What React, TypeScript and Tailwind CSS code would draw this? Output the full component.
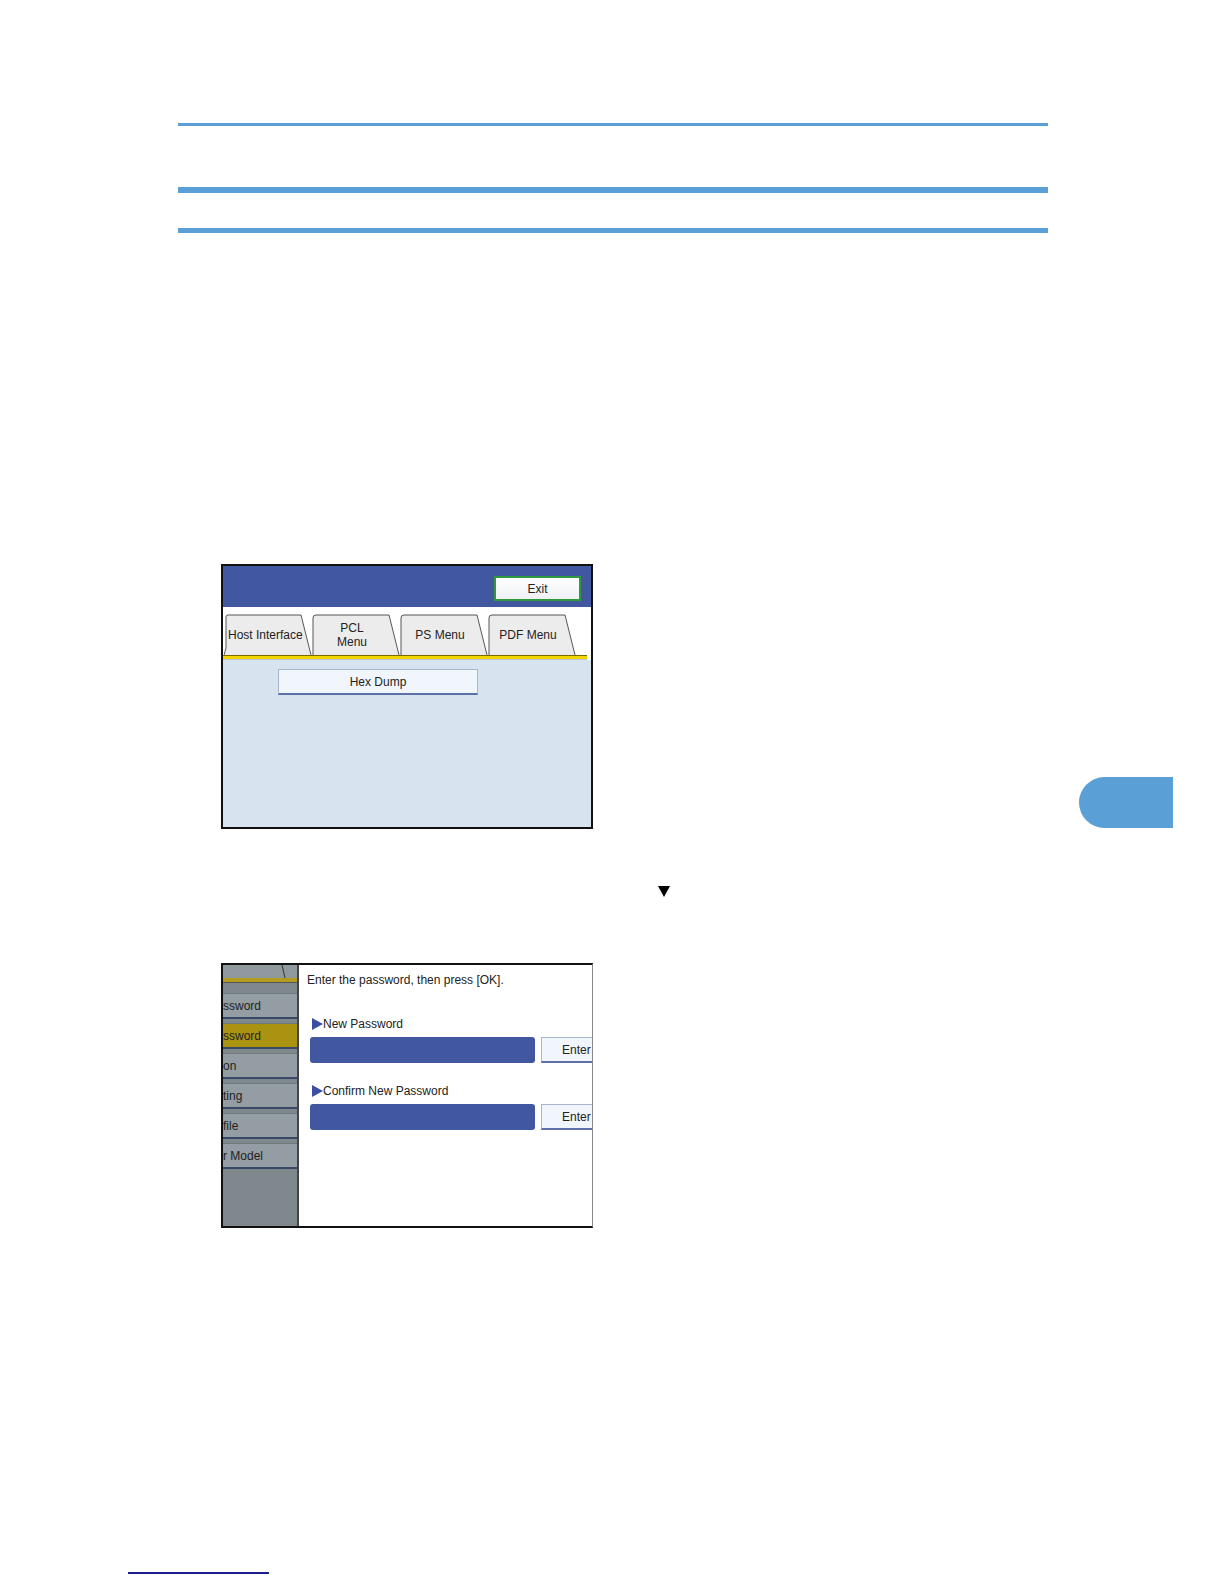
import React from 'react';

const screenFont = { fontFamily: '"Liberation Sans", Arial, sans-serif' };

function Tab({ label, first }: { label: React.ReactNode; first?: boolean }) {
  return (
    <div className="relative w-[88px] h-[41px] shrink-0">
      <svg className="absolute inset-0" width="88" height="41" viewBox="0 0 88 41">
        <path
          d={first ? 'M0 41 L2 34 L2 3 Q2 1 4 1 L77 1 L87 41' : 'M1 41 L1 4 Q1 1 4 1 L77 1 L87 41'}
          fill="#ececec"
          stroke="#555"
          strokeWidth="1"
        />
      </svg>
      <div
        className={`relative h-full flex items-center whitespace-nowrap text-[12px] leading-[14px] text-[#222] text-center ${
          first ? 'justify-start pl-[4px]' : 'justify-center pr-[8px]'
        }`}
      >
        {label}
      </div>
    </div>
  );
}

function PrinterMenuShot() {
  return (
    <div className="w-[372px] h-[265px] border-2 border-[#111] flex flex-col overflow-hidden" style={screenFont}>
      {/* header */}
      <div className="h-[41px] bg-[#4158a0] flex items-start justify-end pr-[10px] pt-[10px]">
        <div className="w-[87px] h-[25px] border-2 border-[#2f9a3c] bg-gradient-to-b from-white to-[#eef1f4] flex items-center justify-center text-[12px] text-[#222]">
          Exit
        </div>
      </div>
      {/* tabs */}
      <div className="h-[48px] bg-white flex items-end pl-[1px]">
        <Tab first label="Host Interface" />
        <Tab label={<span>PCL<br />Menu</span>} />
        <Tab label="PS Menu" />
        <Tab label="PDF Menu" />
      </div>
      <div className="h-[5px] bg-[#f2d400] border-t border-[#7a6a00] border-b border-b-[#b8c4d0] mr-[4px]"></div>
      {/* body */}
      <div className="flex-1 bg-[#d7e3ef] pt-[9px] pl-[55px]">
        <div className="w-[200px] h-[26px] bg-[#f1f5fc] border border-[#a7b6cc] border-b-2 border-b-[#5b6fa8] flex items-center justify-center text-[12px] text-[#222]">
          Hex Dump
        </div>
      </div>
    </div>
  );
}

function SideItem({ label, active }: { label: string; active?: boolean }) {
  return (
    <div
      className={`h-[26px] mt-[4px] flex items-center text-[12px] text-[#222] border-b-2 border-b-[#3a4868] border-t border-t-[#6f7a80] ${
        active ? 'bg-[#a99310]' : 'bg-[#939da3]'
      }`}
    >
      {label}
    </div>
  );
}

function EnterRow() {
  return (
    <div className="flex items-center mt-[5px]">
      <div className="w-[225px] h-[26px] rounded-[3px] bg-[#4158a0] shrink-0"></div>
      <div className="ml-[6px] w-[60px] h-[26px] bg-[#f1f5fc] border border-[#a7b6cc] border-b-2 border-b-[#5b6fa8] flex items-center justify-start pl-[20px] text-[12px] text-[#222] shrink-0">
        Enter
      </div>
    </div>
  );
}

function PasswordShot() {
  return (
    <div className="w-[372px] h-[265px] border-2 border-[#111] border-r-[#888] border-r flex overflow-hidden" style={screenFont}>
      {/* left menu */}
      <div className="w-[76px] shrink-0 bg-[#7e888d] border-r-2 border-r-[#444] flex flex-col">
        <div className="relative h-[13px] bg-[#8f999e]">
          <svg className="absolute left-[58px] top-0" width="8" height="13" viewBox="0 0 8 13">
            <path d="M1 0 L4 13" stroke="#333" strokeWidth="1" fill="none" />
          </svg>
        </div>
        <div className="h-[5px] bg-[#b39a20] border-b border-[#555]"></div>
        <div className="mt-[6px]">
          <SideItem label="ssword" />
          <SideItem label="ssword" active />
          <SideItem label="on" />
          <SideItem label="ting" />
          <SideItem label="file" />
          <SideItem label="r Model" />
        </div>
      </div>
      {/* right content */}
      <div className="flex-1 bg-white pl-[8px] pt-[7px] text-[#222]">
        <div className="text-[12px] leading-[16px]">Enter the password, then press [OK].</div>
        <div className="mt-[28px] ml-[5px] flex items-center text-[12px] leading-[16px]">
          <span className="inline-block w-0 h-0 border-t-[6px] border-b-[6px] border-l-[11px] border-t-transparent border-b-transparent border-l-[#3b4fa0]"></span>
          <span>New Password</span>
        </div>
        <div className="ml-[3px]">
          <EnterRow />
        </div>
        <div className="mt-[20px] ml-[5px] flex items-center text-[12px] leading-[16px]">
          <span className="inline-block w-0 h-0 border-t-[6px] border-b-[6px] border-l-[11px] border-t-transparent border-b-transparent border-l-[#3b4fa0]"></span>
          <span>Confirm New Password</span>
        </div>
        <div className="ml-[3px]">
          <EnterRow />
        </div>
      </div>
    </div>
  );
}

export default function App() {
  return (
    <div className="relative w-full h-screen bg-white overflow-hidden">
      <div className="pt-[123px]">
        {/* heading rules */}
        <div className="ml-[178px] w-[870px]">
          <div className="h-[3px] bg-[#5a9fd6]"></div>
          <div className="mt-[61px] h-[6px] bg-[#5a9fd6]"></div>
          <div className="mt-[35px] h-[5px] bg-[#5a9fd6]"></div>
        </div>

        <div className="ml-[221px] mt-[331px]">
          <PrinterMenuShot />
        </div>

        <div className="ml-[658px] mt-[57px] w-0 h-0 border-l-[6px] border-r-[6px] border-t-[11px] border-l-transparent border-r-transparent border-t-black"></div>

        <div className="ml-[221px] mt-[66px]">
          <PasswordShot />
        </div>

        <div className="ml-[128px] mt-[344px] w-[141px] h-[2px] bg-[#1c1c8c]"></div>
      </div>

      {/* chapter tab */}
      <div className="absolute left-[1079px] top-[777px] w-[94px] h-[51px] rounded-l-[26px] bg-[#5a9fd6]"></div>
    </div>
  );
}
